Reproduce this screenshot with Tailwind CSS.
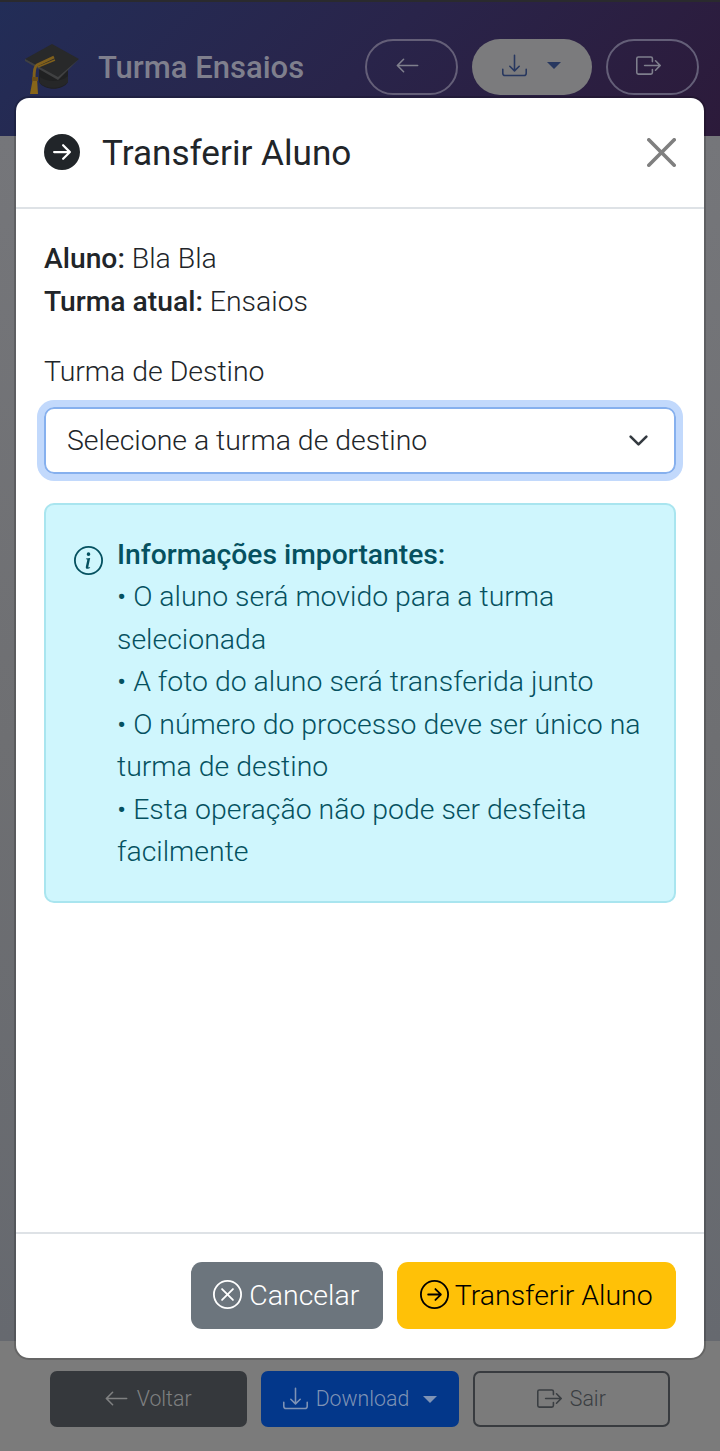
<!DOCTYPE html>
<html lang="pt">
<head>
<meta charset="utf-8">
<title>Turma Ensaios</title>
<script src="https://cdn.jsdelivr.net/npm/@tailwindcss/browser@4"></script>
</head>
<body class="relative flex h-[1451px] w-[720px] flex-col overflow-hidden bg-[#707174] font-['Roboto','Liberation_Sans',sans-serif] text-[28.44px] leading-[42.5px] font-light text-[#212529]">
<svg class="hidden">
  <symbol id="left" viewBox="0 0 16 16"><path fill-rule="evenodd" d="M15 8a.5.5 0 0 0-.5-.5H2.707l3.147-3.146a.5.5 0 1 0-.708-.708l-4 4a.5.5 0 0 0 0 .708l4 4a.5.5 0 0 0 .708-.708L2.707 8.5H14.5A.5.5 0 0 0 15 8"/></symbol>
  <symbol id="down" viewBox="0 0 16 16"><path d="M.5 9.9a.5.5 0 0 1 .5.5v2.5a1 1 0 0 0 1 1h12a1 1 0 0 0 1-1v-2.5a.5.5 0 0 1 1 0v2.5a2 2 0 0 1-2 2H2a2 2 0 0 1-2-2v-2.5a.5.5 0 0 1 .5-.5"/><path d="M7.646 11.854a.5.5 0 0 0 .708 0l3-3a.5.5 0 0 0-.708-.708L8.5 10.293V1.5a.5.5 0 0 0-1 0v8.793L5.354 8.146a.5.5 0 1 0-.708.708z"/></symbol>
  <symbol id="exit" viewBox="0 0 16 16"><path fill-rule="evenodd" d="M10 12.5a.5.5 0 0 1-.5.5h-8a.5.5 0 0 1-.5-.5v-9a.5.5 0 0 1 .5-.5h8a.5.5 0 0 1 .5.5v2a.5.5 0 0 0 1 0v-2A1.5 1.5 0 0 0 9.500 2h-8A1.500 1.500 0 0 0 0 3.500v9A1.500 1.500 0 0 0 1.500 14h8a1.500 1.500 0 0 0 1.500-1.500v-2a.5.5 0 0 0-1 0z"/><path fill-rule="evenodd" d="M15.854 8.354a.5.5 0 0 0 0-.708l-3-3a.5.5 0 0 0-.708.708L14.293 7.500H5.500a.5.5 0 0 0 0 1h8.793l-2.147 2.146a.5.5 0 0 0 .708.708z"/></symbol>
</svg>

<header class="flex h-[136px] shrink-0 justify-between border-t-2 border-[#2a2a2e] bg-linear-135 from-[#222d57] via-[#29244a] to-[#2c1a3a] pt-[37px] pr-[21.5px] pl-[25px]">
  <div class="flex h-14 items-center">
    <svg class="mt-[3px] h-[54px] w-[56px]" viewBox="0 0 56 54">
      <path d="M14 24v16c5 9 24 9 29 0V22z" fill="#202122"/>
      <path d="M15 35c8 6 21 5 28-1v6c-6 7-22 8-28 1z" fill="#262728"/>
      <path d="M27 2 54 17 33 36 0 17z" fill="#28292a"/>
      <path d="M0 17 33 35 54 17 33 38 0 19z" fill="#404142"/>
      <path d="M29 15 12 23c-2 1-3 4-3 14" fill="none" stroke="#80601c" stroke-width="3"/>
      <path d="m30 18-17 7" fill="none" stroke="#80601c" stroke-width="1.500"/>
      <path d="M8 36h4l1 16H5z" fill="#876519"/>
      <path d="M7 35h6v4H7z" fill="#6b4d16"/>
    </svg>
    <h1 class="ml-[17px] pt-px text-[31px] leading-[44px] font-medium text-[#7f7f8d]">Turma Ensaios</h1>
  </div>
  <div class="flex h-14 gap-[14px]">
    <div class="flex w-[93px] justify-center rounded-full border-2 border-[#645f78] pt-[12px] pr-[7px] text-[#7f7f8d]"><svg class="size-[25px] fill-current"><use href="#left"/></svg></div>
    <div class="flex w-[120px] rounded-full bg-[#7b7b7d] pt-[14px] pl-[30px] text-[#27375f]"><svg class="size-[25px] fill-current"><use href="#down"/></svg><svg class="mt-[9px] ml-[20px] h-[7px] w-[14px] fill-current" viewBox="0 0 14 7"><path d="M0 0h14L7 7z"/></svg></div>
    <div class="flex w-[93px] justify-center rounded-full border-2 border-[#645f78] pt-[12px] pr-[8px] text-[#7f7f8d]"><svg class="size-[25px] fill-current"><use href="#exit"/></svg></div>
  </div>
</header>

<main class="flex-1 bg-linear-to-b from-[#75767a] via-[#6e6f72] to-[#66696f]"></main>

<footer class="grid h-[110px] shrink-0 grid-cols-3 gap-[14px] bg-[#7b7b7b] px-[50px] pt-[30px] text-[21.3px] leading-[32px]">
  <div class="flex h-14 items-center justify-center gap-[8px] rounded-[7px] bg-[#35383c] pr-[2px] text-[#7f8081]"><svg class="-mt-[2px] size-[25px] fill-current"><use href="#left"/></svg><span>Voltar</span></div>
  <div class="flex h-14 items-center justify-center gap-[8px] rounded-[7px] bg-[#03378a] text-[#7f93b5]"><svg class="-mt-[2px] size-[25px] fill-current"><use href="#down"/></svg><span>Download</span><svg class="ml-[6px] h-[7px] w-[14px] fill-current" viewBox="0 0 14 7"><path d="M0 0h14L7 7z"/></svg></div>
  <div class="flex h-14 items-center justify-center gap-[8px] rounded-[7px] border-2 border-[#383b3f] text-[#3a3e42]"><svg class="-mt-[2px] size-[25px] fill-current"><use href="#exit"/></svg><span>Sair</span></div>
</footer>

<section class="absolute top-[98px] left-4 flex h-[1260px] w-[688px] flex-col rounded-[13px] bg-white shadow-[0_0_0_2px_rgba(0,0,0,0.175)]">
  <div class="flex h-[111px] shrink-0 items-center border-b-2 border-[#dee2e6] px-[28px]">
    <svg class="-mt-[2px] size-[36px] fill-current" viewBox="0 0 16 16"><path d="M8 0a8 8 0 1 1 0 16A8 8 0 0 1 8 0M4.500 7.500a.5.5 0 0 0 0 1h5.793l-2.147 2.146a.5.5 0 0 0 .708.708l3-3a.5.5 0 0 0 0-.708l-3-3a.5.5 0 1 0-.708.708L10.293 7.500z"/></svg>
    <h2 class="ml-[22px] pt-[2px] text-[35.15px] font-normal">Transferir Aluno</h2>
    <svg class="ml-auto size-[29px] fill-[#7f7f7f]" viewBox="0 0 16 16"><path d="M.293.293a1 1 0 0 1 1.414 0L8 6.586 14.293.293a1 1 0 1 1 1.414 1.414L9.414 8l6.293 6.293a1 1 0 0 1-1.414 1.414L8 9.414l-6.293 6.293a1 1 0 0 1-1.414-1.414L6.586 8 .293 1.707a1 1 0 0 1 0-1.414"/></svg>
  </div>
  <div class="flex-1 px-[28px] pt-[29px]">
    <p><strong class="text-[28.25px] font-medium">Aluno:</strong> Bla Bla</p>
    <p><strong class="text-[28.25px] font-medium">Turma atual:</strong> Ensaios</p>
    <p class="mt-[28px]">Turma de Destino</p>
    <div class="mt-[13px] flex h-[67px] items-center justify-between rounded-[10px] border-2 border-[#86b0ee] pr-[25px] pl-[21px] ring-[7px] ring-[#c2d9fc]">
      <span class="pt-[2px]">Selecione a turma de destino</span>
      <svg class="size-[21px] fill-none stroke-[#343a40]" viewBox="0 0 16 16"><path d="m2 5 6 6 6-6" stroke-linecap="round" stroke-linejoin="round" stroke-width="2"/></svg>
    </div>
    <div class="mt-[29px] flex h-[400px] rounded-[10px] border-2 border-[#a9e5ef] bg-[#cff6fd] pt-[29px] pr-[28px] pl-[28px] text-[#055160]">
      <svg class="mt-[12px] mr-[14px] size-[29px] shrink-0 fill-current" viewBox="0 0 16 16"><path d="M8 15A7 7 0 1 1 8 1a7 7 0 0 1 0 14m0 1A8 8 0 1 0 8 0a8 8 0 0 0 0 16"/><path d="m8.930 6.588-2.290.287-.082.380.450.083c.294.070.352.176.288.469l-.738 3.468c-.194.897.105 1.319.808 1.319.545 0 1.178-.252 1.465-.598l.088-.416c-.2.176-.492.246-.686.246-.275 0-.375-.193-.304-.533zM9 4.500a1 1 0 1 1-2 0 1 1 0 0 1 2 0"/></svg>
      <div class="whitespace-nowrap"><strong class="text-[28.25px] font-medium">Informações importantes:</strong><br>• O aluno será movido para a turma<br>selecionada<br>• A foto do aluno será transferida junto<br>• O número do processo deve ser único na<br>turma de destino<br>• Esta operação não pode ser desfeita<br>facilmente</div>
    </div>
  </div>
  <div class="flex h-[126px] shrink-0 justify-end gap-[14px] border-t-2 border-[#dee2e6] px-[28px] pt-[28px]">
    <button class="flex h-[67px] w-[191.5px] items-center justify-center gap-[7px] rounded-[11px] bg-[#6c757d] pr-[1px] text-white"><svg class="-mt-[2px] size-[29px] fill-current" viewBox="0 0 16 16"><path d="M8 15A7 7 0 1 1 8 1a7 7 0 0 1 0 14m0 1A8 8 0 1 0 8 0a8 8 0 0 0 0 16"/><path d="M4.646 4.646a.5.5 0 0 1 .708 0L8 7.293l2.646-2.647a.5.5 0 0 1 .708.708L8.707 8l2.647 2.646a.5.5 0 0 1-.708.708L8 8.707l-2.646 2.647a.5.5 0 0 1-.708-.708L7.293 8 4.646 5.354a.5.5 0 0 1 0-.708"/></svg><span class="pt-px">Cancelar</span></button>
    <button class="flex h-[67px] w-[279.5px] items-center justify-center gap-[6px] rounded-[11px] bg-[#ffc107] text-black"><svg class="-mt-[2px] size-[29px] fill-current" viewBox="0 0 16 16"><path fill-rule="evenodd" d="M1 8a7 7 0 1 0 14 0A7 7 0 0 0 1 8m15 0A8 8 0 1 1 0 8a8 8 0 0 1 16 0M4.500 7.500a.5.5 0 0 0 0 1h5.793l-2.147 2.146a.5.5 0 0 0 .708.708l3-3a.5.5 0 0 0 0-.708l-3-3a.5.5 0 1 0-.708.708L10.293 7.500z"/></svg><span class="pt-px">Transferir Aluno</span></button>
  </div>
</section>
</body>
</html>
